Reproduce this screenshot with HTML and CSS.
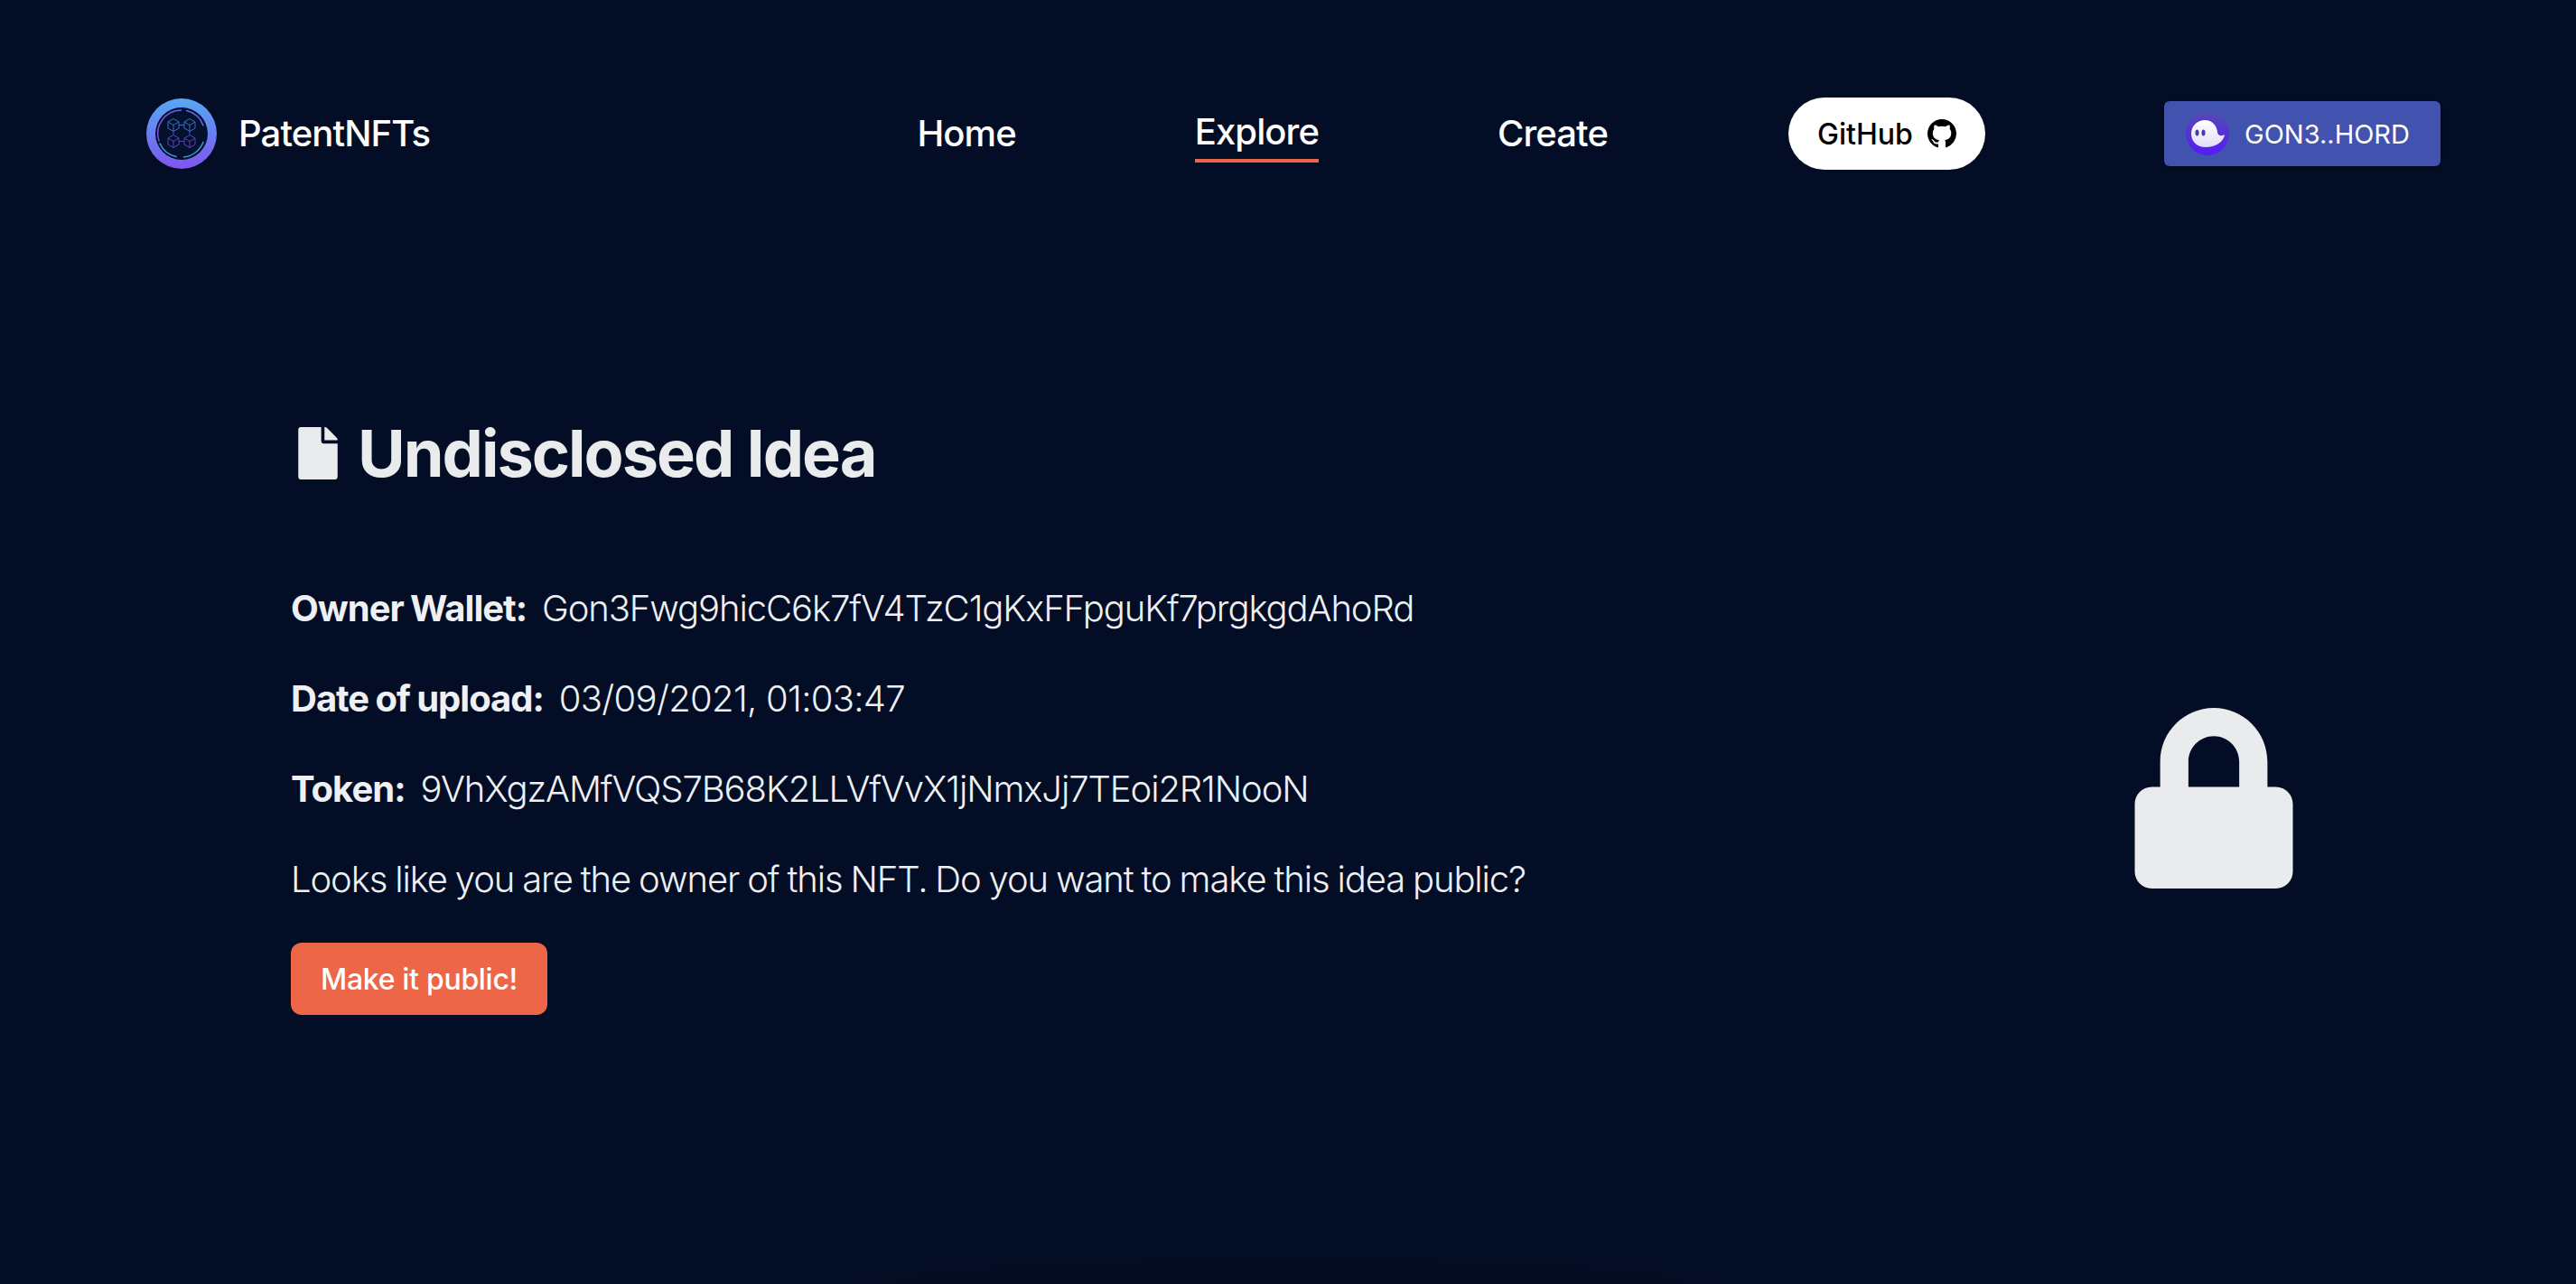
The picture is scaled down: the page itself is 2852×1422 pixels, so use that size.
FILE: index.html
```html
<!DOCTYPE html>
<html lang="en">
<head>
<meta charset="utf-8">
<title>PatentNFTs</title>
<link rel="stylesheet" href="styles.css">
</head>
<body>
<header class="topbar">
  <a class="brand">
    <svg class="brand-logo" viewBox="0 0 78 78">
      <defs>
        <linearGradient id="ring" x1="0" y1="0" x2="0" y2="1"><stop offset="0" stop-color="#54a9f4"/><stop offset="1" stop-color="#7f55ee"/></linearGradient>
        <linearGradient id="arcTop" x1="0" y1="0" x2="1" y2="0"><stop offset="0" stop-color="#7a4fe0"/><stop offset="1" stop-color="#5c6fe0"/></linearGradient>
      </defs>
      <circle cx="39" cy="39" r="39" fill="url(#ring)"/>
      <circle cx="39" cy="39" r="29" fill="#03102e"/>
      <path d="M14 47 A26 26 0 0 1 38.500 13" class="arc" stroke="url(#arcTop)"/>
      <path d="M44.500 13.500 A26 26 0 0 1 63 30" class="arc" stroke="#6a63e6"/>
      <path d="M15 50 A26 26 0 0 0 33 64.500" class="arc" stroke="#38a4e2"/>
      <path d="M41.500 65 A26 26 0 0 0 63 48.500" class="arc" stroke="#3f9be4"/>
      <g class="cubes-top">
        <path d="M24 26 L30 22.500 L36 26 L36 33 L30 36.500 L24 33 Z M24 26 L30 29.500 L36 26 M30 29.500 V36.500"/>
        <path d="M42 26 L48 22.500 L54 26 L54 33 L48 36.500 L42 33 Z M42 26 L48 29.500 L54 26 M48 29.500 V36.500"/>
        <path d="M36 29.500 H42"/>
      </g>
      <g class="cubes-bottom">
        <path d="M24 44 L30 40.500 L36 44 L36 51 L30 54.500 L24 51 Z M24 44 L30 47.500 L36 44 M30 47.500 V54.500"/>
        <path d="M42 44 L48 40.500 L54 44 L54 51 L48 54.500 L42 51 Z M42 44 L48 47.500 L54 44 M48 47.500 V54.500"/>
        <path d="M36 47.500 H42 M30 36.500 V40.500 M48 36.500 V40.500"/>
      </g>
    </svg>
    <span class="brand-name">PatentNFTs</span>
  </a>
  <nav class="nav">
    <a class="nav-link">Home</a>
    <a class="nav-link nav-link-active">Explore</a>
    <a class="nav-link">Create</a>
    <a class="github">GitHub
      <svg class="github-icon" viewBox="0 0 16 16"><path d="M8 0C3.58 0 0 3.58 0 8c0 3.54 2.29 6.53 5.47 7.59.4.07.55-.17.55-.38 0-.19-.01-.82-.01-1.49-2.01.37-2.53-.49-2.69-.94-.09-.23-.48-.94-.82-1.13-.28-.15-.68-.52-.01-.53.63-.01 1.08.58 1.23.82.72 1.21 1.87.87 2.33.66.07-.52.28-.87.51-1.07-1.78-.2-3.64-.89-3.64-3.95 0-.87.31-1.59.82-2.15-.08-.2-.36-1.02.08-2.12 0 0 .67-.21 2.2.82.64-.18 1.32-.27 2-.27.68 0 1.36.09 2 .27 1.53-1.04 2.2-.82 2.2-.82.44 1.1.16 1.92.08 2.12.51.56.82 1.27.82 2.15 0 3.07-1.87 3.75-3.65 3.95.29.25.54.73.54 1.48 0 1.07-.01 1.93-.01 2.2 0 .21.15.46.55.38A8.013 8.013 0 0016 8c0-4.42-3.58-8-8-8z"/></svg>
    </a>
    <button class="wallet">
      <svg class="wallet-icon" viewBox="0 0 48 48">
        <defs>
          <linearGradient id="phBg" x1="0" y1="0" x2="0" y2="1"><stop offset="0" stop-color="#534bb1"/><stop offset="1" stop-color="#551bf9"/></linearGradient>
          <linearGradient id="phGhost" x1="0" y1="0" x2="0" y2="1"><stop offset="0" stop-color="#ffffff"/><stop offset="1" stop-color="#e3dcf8"/></linearGradient>
        </defs>
        <circle cx="24" cy="24" r="24" fill="url(#phBg)"/>
        <path fill="url(#phGhost)" d="M6 24C6 15.500 13 9 21 9C29 9 34.500 15 35 22.500C35.300 26 39 27.500 43 25C42 33 33 39 22 39C13 39 6 33 6 24Z"/>
        <ellipse cx="12.500" cy="23" rx="2" ry="3.500" fill="#4a3aa8"/>
        <ellipse cx="19.500" cy="23" rx="2" ry="3.500" fill="#4a3aa8"/>
      </svg>
      <span>GON3..HORD</span>
    </button>
  </nav>
</header>
<main class="page">
  <section class="details">
    <h1 class="title">
      <svg class="title-icon" viewBox="0 0 384 512"><path d="M224 136V0H24C10.700 0 0 10.700 0 24v464c0 13.300 10.700 24 24 24h336c13.300 0 24-10.700 24-24V160H248c-13.200 0-24-10.800-24-24zm160-14.100v6.100H256V0h6.100c6.400 0 12.500 2.500 17 7l97.900 98c4.500 4.500 7 10.600 7 16.900z"/></svg>
      Undisclosed Idea
    </h1>
    <p class="row"><strong class="label">Owner Wallet:</strong> Gon3Fwg9hicC6k7fV4TzC1gKxFFpguKf7prgkgdAhoRd</p>
    <p class="row"><strong class="label">Date of upload:</strong> <span class="date">03/09/2021, 01:03:47</span></p>
    <p class="row"><strong class="label">Token:</strong> 9VhXgzAMfVQS7B68K2LLVfVvX1jNmxJj7TEoi2R1NooN</p>
    <p class="row row-last">Looks like you are the owner of this NFT. Do you want to make this idea public?</p>
    <button class="publish">Make it public!</button>
  </section>
  <aside class="lock">
    <svg class="lock-icon" viewBox="0 0 448 512"><path d="M400 224h-24v-72C376 68.200 307.800 0 224 0S72 68.200 72 152v72H48c-26.500 0-48 21.500-48 48v192c0 26.500 21.500 48 48 48h352c26.500 0 48-21.500 48-48V272c0-26.500-21.500-48-48-48zm-104 0H152v-72c0-39.700 32.300-72 72-72s72 32.300 72 72v72z"/></svg>
  </aside>
</main>
</body>
</html>
```
FILE: styles.css
```css
* { box-sizing: border-box; }
html, body { margin: 0; height: 100%; }
body {
  background: radial-gradient(ellipse 620px 40px at 50% 100%, #040b1e 30%, rgba(4, 11, 30, 0)), #030e26;
  color: #fff;
  font-family: Inter, "Liberation Sans", sans-serif;
  overflow: hidden;
}
.topbar {
  display: flex;
  align-items: center;
  justify-content: space-between;
  height: 80px;
  margin: 108px 150px 0 162px;
}
.brand { display: flex; align-items: center; gap: 24px; }
.brand-logo { width: 78px; height: 78px; display: block; }
.arc { fill: none; stroke-width: 1.5; stroke-linecap: round; }
.cubes-top, .cubes-bottom { fill: none; stroke-width: 1; }
.cubes-top { stroke: #3f6fc4; }
.cubes-bottom { stroke: #5a45b5; }
.brand-name { font-size: 40px; font-weight: 500; line-height: 48px; letter-spacing: -0.9px; }
.nav { display: flex; align-items: center; gap: 198px; }
.nav-link {
  font-size: 40px;
  font-weight: 500;
  line-height: 48px;
  letter-spacing: -0.9px;
  padding: 6px 0;
}
.nav-link-active { border-bottom: 4px solid #ec6647; }
.github {
  display: flex;
  align-items: center;
  justify-content: center;
  gap: 16px;
  width: 218px;
  height: 80px;
  margin-left: 2px;
  border-radius: 40px;
  background: #fff;
  color: #000;
  font-size: 32px;
  font-weight: 500;
}
.github-icon { width: 32px; height: 32px; fill: #000; }
.wallet {
  display: flex;
  align-items: center;
  gap: 17px;
  width: 306px;
  height: 72px;
  padding: 0 24px;
  border: 0;
  border-radius: 6px;
  background: #4152af;
  color: #fff;
  font-family: Inter, "Liberation Sans", sans-serif;
  font-size: 29px;
  box-shadow: 0 2px 4px rgba(0, 0, 0, 0.3);
}
.wallet-icon { width: 48px; height: 48px; flex: none; }
.page {
  display: flex;
  justify-content: space-between;
  margin: 0 313px 0 322px;
}
.details { padding-top: 270px; }
.title {
  display: flex;
  align-items: center;
  gap: 22px;
  margin: 0 0 104px;
  color: #e9ebed;
  font-size: 72px;
  font-weight: 700;
  line-height: 88px;
  letter-spacing: -2px;
}
.title-icon { width: 44px; height: 58px; fill: #e9ebed; margin-left: 8px; }
.row {
  margin: 0 0 52px;
  color: #eef0f3;
  font-size: 40px;
  font-weight: 300;
  line-height: 48px;
  letter-spacing: -1.1px;
  word-spacing: -1.2px;
}
.row-last { margin-bottom: 46px; }
.label { font-weight: 700; margin-right: 8px; letter-spacing: -1px; }
.date { letter-spacing: -0.7px; word-spacing: 0; }
.publish {
  display: block;
  width: 284px;
  height: 80px;
  border: 0;
  border-radius: 12px;
  background: #ec6647;
  color: #fff;
  font-family: Inter, "Liberation Sans", sans-serif;
  font-size: 32px;
  font-weight: 500;
  letter-spacing: -0.3px;
}
.lock { padding-top: 596px; }
.lock-icon { display: block; width: 176px; height: 200px; fill: #e9ebed; }
```
